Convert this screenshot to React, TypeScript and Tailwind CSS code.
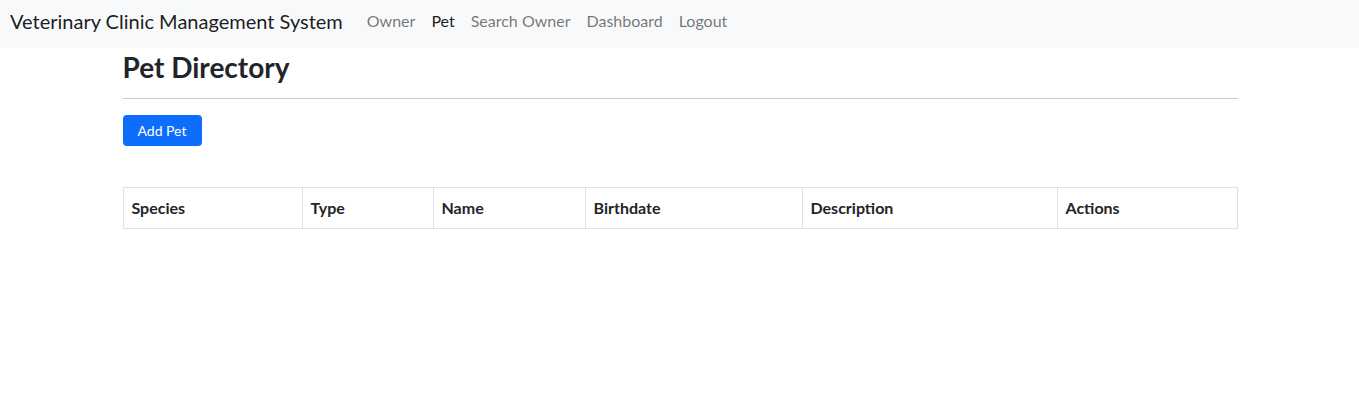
import React from "react";

const links = [
  { label: "Owner", active: false },
  { label: "Pet", active: true },
  { label: "Search Owner", active: false },
  { label: "Dashboard", active: false },
  { label: "Logout", active: false },
];

const columns = [
  { label: "Species", width: "w-[179px]" },
  { label: "Type", width: "w-[131px]" },
  { label: "Name", width: "w-[152px]" },
  { label: "Birthdate", width: "w-[217px]" },
  { label: "Description", width: "w-[255px]" },
  { label: "Actions", width: "" },
];

export default function App() {
  return (
    <div className="min-h-[410px] bg-white font-['Lato',sans-serif] text-[#212529]">
      <nav className="flex h-[48px] items-center bg-[#f8f9fa] px-[10px] pb-[6px]">
        <span className="mr-4 text-[20px] leading-[30px] text-black/90">
          Veterinary Clinic Management System
        </span>
        <ul className="flex items-center">
          {links.map((l) => (
            <li key={l.label}>
              <a
                href="#"
                className={
                  l.active
                    ? "block px-2 text-[16px] leading-6 text-black/90"
                    : "block px-2 text-[16px] leading-6 text-black/55"
                }
              >
                {l.label}
              </a>
            </li>
          ))}
        </ul>
      </nav>

      <main className="mx-auto w-[1116px] pl-[1px]">
        <h2 className="mt-[1px] text-[28px] font-bold leading-[36px]">Pet Directory</h2>
        <hr className="mt-[13px] border-t border-[#c9c9c9]" />
        <button className="mt-4 h-[31px] rounded-[4px] bg-[#0d6efd] px-[15px] text-[14px] leading-[31px] text-white">
          Add Pet
        </button>

        <table className="mt-[41px] w-full border-collapse border border-[#dee2e6]">
          <thead>
            <tr>
              {columns.map((c) => (
                <th
                  key={c.label}
                  className={`${c.width} h-[41px] border border-[#dee2e6] px-2 text-left text-[16px] font-bold`}
                >
                  {c.label}
                </th>
              ))}
            </tr>
          </thead>
          <tbody />
        </table>
      </main>
    </div>
  );
}
